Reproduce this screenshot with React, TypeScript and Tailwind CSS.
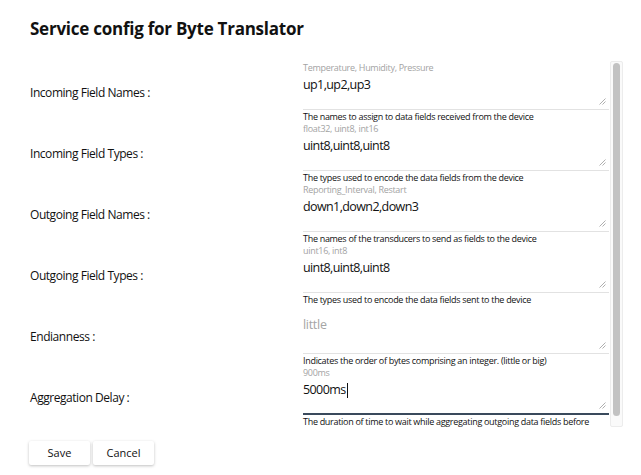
import React from "react";

type Field = {
  label: string;
  hint?: string;
  value: string;
  placeholder?: boolean;
  desc: string;
  focused?: boolean;
};

const fields: Field[] = [
  {
    label: "Incoming Field Names :",
    hint: "Temperature, Humidity, Pressure",
    value: "up1,up2,up3",
    desc: "The names to assign to data fields received from the device",
  },
  {
    label: "Incoming Field Types :",
    hint: "float32, uint8, int16",
    value: "uint8,uint8,uint8",
    desc: "The types used to encode the data fields from the device",
  },
  {
    label: "Outgoing Field Names :",
    hint: "Reporting_Interval, Restart",
    value: "down1,down2,down3",
    desc: "The names of the transducers to send as fields to the device",
  },
  {
    label: "Outgoing Field Types :",
    hint: "uint16, int8",
    value: "uint8,uint8,uint8",
    desc: "The types used to encode the data fields sent to the device",
  },
  {
    label: "Endianness :",
    value: "little",
    placeholder: true,
    desc: "Indicates the order of bytes comprising an integer. (little or big)",
  },
  {
    label: "Aggregation Delay :",
    hint: "900ms",
    value: "5000ms",
    desc: "The duration of time to wait while aggregating outgoing data fields before",
    focused: true,
  },
];

function ResizeHandle() {
  return (
    <svg width="7" height="7" viewBox="0 0 7 7" className="absolute right-[3px] bottom-[4px]">
      <line x1="6.5" y1="0.5" x2="0.5" y2="6.5" stroke="#9a9a9a" strokeWidth="0.8" />
      <line x1="6.5" y1="3.5" x2="3.5" y2="6.5" stroke="#9a9a9a" strokeWidth="0.8" />
    </svg>
  );
}

function Row({ f }: { f: Field }) {
  return (
    <div className="flex h-[61px]">
      <div className="w-[303px] shrink-0 pl-[30px] flex items-center text-[12px] tracking-[-0.45px] text-[#111]">
        {f.label}
      </div>
      <div className="w-[306px] shrink-0 flex flex-col">
        <div className="h-[12px] text-[9px] leading-[12px] tracking-[-0.3px] text-[#a3a3a3] whitespace-nowrap">
          {f.hint ?? ""}
        </div>
        <div
          className={
            "relative h-[36px] " +
            (f.focused ? "border-b-2 border-[#3a4a5c]" : "border-b border-[#e2e2e2]")
          }
        >
          {f.placeholder ? (
            <div className="text-[12.5px] leading-[16px] mt-[-1px] tracking-[-0.3px] text-[#a5a5a5]">{f.value}</div>
          ) : (
            <div className="text-[12.5px] leading-[22px] tracking-[-0.6px] text-[#111] flex items-center">
              <span>{f.value}</span>
              {f.focused && <span className="inline-block w-[1px] h-[15px] bg-[#111] ml-[1px]" />}
            </div>
          )}
          <ResizeHandle />
        </div>
        <div className="h-[13px] pt-[1px] text-[9px] leading-[12px] tracking-[-0.3px] text-[#111] whitespace-nowrap">
          {f.desc}
        </div>
      </div>
    </div>
  );
}

export default function App() {
  return (
    <div
      className="w-[641px] h-[475px] bg-white overflow-hidden"
      style={{ fontFamily: '"Open Sans", "Noto Sans", sans-serif' }}
    >
      <div className="pl-[30px] pt-[17px] h-[60px] text-[17px] font-bold leading-[24px] tracking-[-0.25px] text-[#111]">
        Service config for Byte Translator
      </div>
      <div className="flex h-[368px]">
        <div className="w-[609px] overflow-hidden pt-[2px]">
          {fields.map((f) => (
            <Row key={f.label} f={f} />
          ))}
        </div>
        <div className="w-[14px] pt-[1px] pb-[1px] pl-[1px]">
          <div className="h-full border border-[#ececec] bg-[#fafafa] rounded-[2px] flex justify-center pt-[1px]">
            <div className="w-[7px] h-[353px] rounded-[4px] bg-[#c2c2c2]" />
          </div>
        </div>
      </div>
      <div className="flex gap-[3px] pl-[29px] pt-[13px]">
        <button className="w-[61px] h-[24px] bg-white rounded-[2px] text-[11px] text-[#111] shadow-[0_1px_3px_rgba(0,0,0,0.25)]">
          Save
        </button>
        <button className="w-[61px] h-[24px] bg-white rounded-[2px] text-[11px] text-[#111] shadow-[0_1px_3px_rgba(0,0,0,0.25)]">
          Cancel
        </button>
      </div>
    </div>
  );
}
